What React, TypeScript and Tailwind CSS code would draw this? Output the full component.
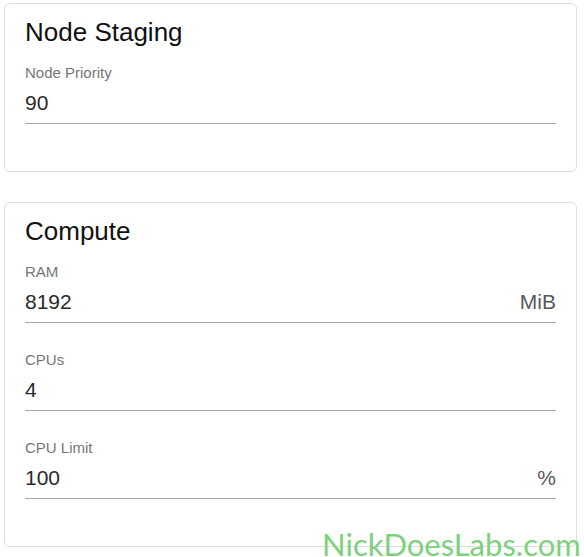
import React from 'react';

interface Field {
  label: string;
  value: string;
  unit?: string;
}

const stagingFields: Field[] = [{ label: 'Node Priority', value: '90' }];

const computeFields: Field[] = [
  { label: 'RAM', value: '8192', unit: 'MiB' },
  { label: 'CPUs', value: '4' },
  { label: 'CPU Limit', value: '100', unit: '%' },
];

const FieldRow: React.FC<{ field: Field; first: boolean }> = ({ field, first }) => (
  <div className={first ? 'mt-[15px]' : 'mt-[27px]'}>
    <div className="text-[15px] leading-[20px] text-[#767676]">{field.label}</div>
    <div className="mt-[6px] flex items-baseline justify-between border-b border-[#a6a6a6] pb-[6px]">
      <span className="text-[21px] leading-[28px] text-[#2a2a2a]">{field.value}</span>
      {field.unit && <span className="text-[21px] leading-[28px] text-[#58585b]">{field.unit}</span>}
    </div>
  </div>
);

const Card: React.FC<{ title: string; fields: Field[] }> = ({ title, fields }) => (
  <section className="w-[573px] rounded-[6px] border border-[#dedede] bg-white pt-[12px] pb-[47px] pl-[20px] pr-[20px]">
    <h2 className="text-[26px] leading-[32px] text-[#111111]">{title}</h2>
    {fields.map((f, i) => (
      <FieldRow key={f.label} field={f} first={i === 0} />
    ))}
  </section>
);

export default function App() {
  return (
    <div
      className="relative h-[557px] w-[584px] overflow-hidden bg-white"
      style={{ fontFamily: '"Liberation Sans", Arial, sans-serif' }}
    >
      <div className="flex flex-col gap-[30px] pl-[4px] pt-[3px]">
        <Card title="Node Staging" fields={stagingFields} />
        <Card title="Compute" fields={computeFields} />
      </div>
      <div
        className="pointer-events-none absolute left-[322px] top-[524px] whitespace-nowrap text-[31px] leading-[40px] text-[#7dd17d]"
        style={{ fontFamily: 'Lato, sans-serif' }}
      >
        NickDoesLabs.com
      </div>
    </div>
  );
}
